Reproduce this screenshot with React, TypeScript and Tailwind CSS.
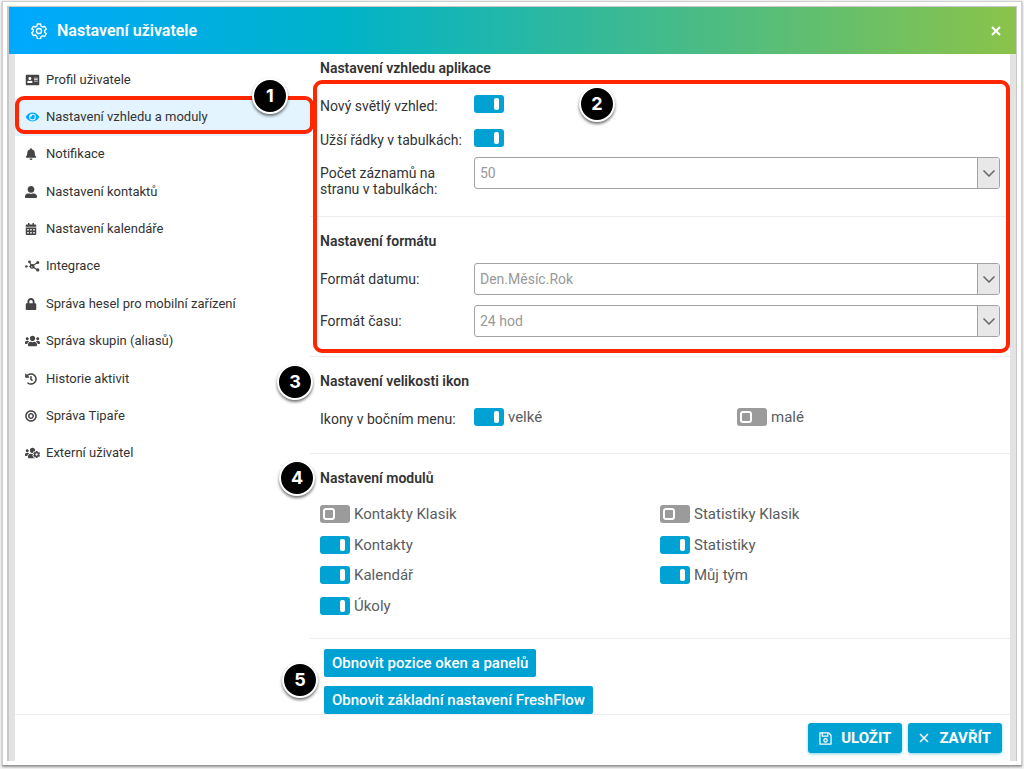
import React, { useState } from 'react'
import type { ReactNode } from 'react'
import {
  FaAddressCard,
  FaBell,
  FaBullseye,
  FaCalendarAlt,
  FaEye,
  FaHistory,
  FaLock,
  FaUserAlt,
  FaUsers,
  FaUsersCog,
} from 'react-icons/fa'

const NetworkIcon = ({ className }: { className?: string }) => (
  <svg viewBox="0 0 20 16" fill="currentColor" stroke="currentColor" className={className}>
    <path d="M9 8 6 3M9 8l7-4M9 8l7 5" fill="none" strokeWidth="1.4" />
    <circle cx="9.5" cy="8.5" r="2.4" fill="none" strokeWidth="1.8" />
    <circle cx="1.8" cy="8.5" r="1.6" stroke="none" />
    <circle cx="6" cy="2.4" r="1.9" stroke="none" />
    <circle cx="17" cy="3.2" r="2" stroke="none" />
    <circle cx="17" cy="13.2" r="2.2" stroke="none" />
    <path d="M3 8.5h4" strokeWidth="1" strokeDasharray="1.4 1" />
  </svg>
)

const GearIcon = () => (
  <svg viewBox="0 0 24 24" fill="none" stroke="currentColor" strokeWidth="2" strokeLinejoin="round" className="size-4">
    <path d="M9.6 1.5h4.8l.7 3.2 2.3 1.3 3.1-1 2.4 4.2-2.4 2.1v2.6l2.4 2.1-2.4 4.2-3.1-1-2.3 1.3-.7 3.2H9.6l-.7-3.2L6.6 18l-3.1 1-2.4-4.2 2.4-2.1v-2.6L1.1 9.2 3.5 5l3.1 1 2.3-1.3z" />
    <circle cx="12" cy="12" r="3.8" />
  </svg>
)

const SaveIcon = () => (
  <svg viewBox="0 0 14 14" fill="none" stroke="currentColor" strokeWidth="1.3" strokeLinejoin="round" className="size-[13px]">
    <path d="M1 1h9.5L13 3.5V13H1z" />
    <path d="M3.5 1v3.5h6V1" />
    <circle cx="7" cy="9" r="1.8" />
  </svg>
)

const CrossIcon = ({ className }: { className: string }) => (
  <svg viewBox="0 0 10 10" fill="none" stroke="currentColor" className={className}>
    <path d="M1 1l8 8M9 1L1 9" />
  </svg>
)

const menu = [
  { label: 'Profil uživatele', Icon: FaAddressCard },
  { label: 'Nastavení vzhledu a moduly', Icon: FaEye },
  { label: 'Notifikace', Icon: FaBell },
  { label: 'Nastavení kontaktů', Icon: FaUserAlt },
  { label: 'Nastavení kalendáře', Icon: FaCalendarAlt },
  { label: 'Integrace', Icon: NetworkIcon },
  { label: 'Správa hesel pro mobilní zařízení', Icon: FaLock },
  { label: 'Správa skupin (aliasů)', Icon: FaUsers },
  { label: 'Historie aktivit', Icon: FaHistory },
  { label: 'Správa Tipaře', Icon: FaBullseye },
  { label: 'Externí uživatel', Icon: FaUsersCog },
]

// icons that need more room than the 12px default
const wide = [FaAddressCard, FaEye, NetworkIcon, FaUsers, FaUsersCog]

const modules = [
  { label: 'Kontakty Klasik', on: false },
  { label: 'Statistiky Klasik', on: false },
  { label: 'Kontakty', on: true },
  { label: 'Statistiky', on: true },
  { label: 'Kalendář', on: true },
  { label: 'Můj tým', on: true },
  { label: 'Úkoly', on: true },
]

function Step({ n, className }: { n: number; className: string }) {
  return (
    <span
      className={`absolute z-10 flex size-9 items-center justify-center rounded-full border-2 border-white bg-black font-['Inter'] text-lg font-bold text-white shadow-[0_2px_3px_rgba(0,0,0,0.55)] ${className}`}
    >
      {n}
    </span>
  )
}

function Toggle({ id, on }: { id: string; on: boolean }) {
  return (
    <input
      id={id}
      type="checkbox"
      defaultChecked={on}
      className="flex h-[18px] w-[30px] shrink-0 appearance-none items-center rounded-[3px] bg-[#9b9b9b] px-[3px] before:size-3 before:rounded-[3px] before:border-2 before:border-white before:content-[''] checked:bg-[#00a1d3] checked:px-[5px] checked:before:ml-auto checked:before:w-[5px] checked:before:rounded-[2px] checked:before:bg-white"
    />
  )
}

function LabeledToggle({ id, label, on }: { id: string; label: string; on: boolean }) {
  return (
    <div className="flex items-center gap-1">
      <Toggle id={id} on={on} />
      <label htmlFor={id} className="text-[15px] leading-5 text-[#5a5d60]">
        {label}
      </label>
    </div>
  )
}

function SelectBox({ id, options }: { id: string; options: string[] }) {
  return (
    <div className="relative flex h-8 min-w-0 flex-1 overflow-hidden rounded-[3px] border border-[#a3a3a3] bg-white">
      <select id={id} className="w-full appearance-none bg-transparent px-[5px] text-sm text-[#999] outline-none">
        {options.map((o) => (
          <option key={o}>{o}</option>
        ))}
      </select>
      <span className="pointer-events-none flex w-[22px] shrink-0 items-center justify-center border-l border-[#a3a3a3] bg-[#e8e8e8] text-[#666]">
        <svg viewBox="0 0 12 7" fill="none" stroke="currentColor" strokeWidth="1.5" className="h-[7px] w-3">
          <path d="M.5.5 6 6 11.5.5" />
        </svg>
      </span>
    </div>
  )
}

function Heading({ children }: { children: ReactNode }) {
  return <h2 className="text-sm leading-5 font-semibold text-[#333]">{children}</h2>
}

function Field({ id, label, children }: { id: string; label: string; children: ReactNode }) {
  return (
    <div className="flex items-start">
      <label htmlFor={id} className="w-[154px] shrink-0 pt-2 pr-1 text-sm leading-4 text-[#333]">
        {label}
      </label>
      {children}
    </div>
  )
}

export default function App() {
  const [active, setActive] = useState(1)

  return (
    <div className="flex min-h-screen bg-[#f4f4f4] px-[2px] pt-px pb-[3px] font-['Roboto',sans-serif]">
      <div className="flex flex-1 border border-[#d0d0d0] border-b-[#999] bg-white px-1 pt-1 pb-1 shadow-[0_1px_2px_rgba(0,0,0,0.4)]">
        <div className="flex flex-1 flex-col border border-b-0 border-l-2 border-[#c8c8c8]">
          <header className="flex h-[47px] items-center bg-[linear-gradient(90deg,#00a9ff,#00b3c8_33%,#8bc34a)] pr-[15px] pl-[22px] text-white">
            <GearIcon />
            <h1 className="ml-[10px] flex-1 text-base font-semibold">Nastavení uživatele</h1>
            <button type="button" aria-label="Zavřít okno">
              <CrossIcon className="size-[10px] stroke-2" />
            </button>
          </header>

          <div className="flex flex-1 flex-col border-x-[6px] border-[#e3e3e3]">
            <div className="flex flex-1">
              <nav className="w-[295px] shrink-0 pt-[7px]">
                <ul className="grid h-[411px] auto-rows-fr">
                  {menu.map(({ label, Icon }, i) => (
                    <li key={label} className="relative flex">
                      <button
                        type="button"
                        onClick={() => setActive(i)}
                        className={`flex w-full items-center pl-[10px] text-left text-[#333] ${i === active ? 'bg-[#e3f4fe]' : ''}`}
                      >
                        <span className={`flex w-[21px] ${i === active ? 'text-[#00aaff]' : 'text-[#444]'}`}>
                          <Icon className={wide.includes(Icon) ? 'h-3 w-[15px]' : 'size-3'} />
                        </span>
                        <span className="text-[13px] leading-5">{label}</span>
                      </button>
                      {i === 1 && (
                        <>
                          <span className="pointer-events-none absolute top-[-2px] right-[-4px] bottom-[2px] left-0 rounded-[9px] border-4 border-[#ff2600]" />
                          <Step n={1} className="-top-5 right-[22px]" />
                        </>
                      )}
                    </li>
                  ))}
                </ul>
              </nav>

              <main className="min-w-0 flex-1">
                <div className="relative">
                  <section className="border-b border-[#ececec] px-[10px] pt-1 pb-[19px]">
                    <Heading>Nastavení vzhledu aplikace</Heading>
                    <div className="mt-[9px] flex h-[34px] items-center">
                      <label htmlFor="light" className="w-[154px] pt-1 text-sm leading-4 text-[#333]">
                        Nový světlý vzhled:
                      </label>
                      <Toggle id="light" on />
                    </div>
                    <div className="mb-[2px] flex h-[34px] items-center">
                      <label htmlFor="rows" className="w-[154px] pt-1 text-sm leading-4 text-[#333]">
                        Užší řádky v tabulkách:
                      </label>
                      <Toggle id="rows" on />
                    </div>
                    <Field id="count" label="Počet záznamů na stranu v tabulkách:">
                      <SelectBox id="count" options={['50', '100', '200']} />
                    </Field>
                  </section>

                  <section className="border-b border-[#ececec] px-[10px] pt-[14px] pb-[19px]">
                    <Heading>Nastavení formátu</Heading>
                    <div className="mt-3 flex flex-col gap-[10px]">
                      <Field id="date" label="Formát datumu:">
                        <SelectBox id="date" options={['Den.Měsíc.Rok', 'Rok-Měsíc-Den']} />
                      </Field>
                      <Field id="time" label="Formát času:">
                        <SelectBox id="time" options={['24 hod', '12 hod']} />
                      </Field>
                    </div>
                  </section>
                  <span className="pointer-events-none absolute top-[26px] right-0 bottom-1 left-[3px] rounded-[9px] border-4 border-[#ff2600]" />
                  <Step n={2} className="top-8 left-[269px]" />
                </div>

                <section className="relative border-b border-[#ececec] px-[10px] pt-[14px] pb-[19px]">
                  <Step n={3} className="top-[7px] -left-[33px]" />
                  <Heading>Nastavení velikosti ikon</Heading>
                  <div className="mt-[9px] flex h-[34px] items-center">
                    <span className="w-[154px] shrink-0 pt-1 text-sm leading-4 text-[#333]">Ikony v bočním menu:</span>
                    <div className="grid flex-1 grid-cols-2">
                      <LabeledToggle id="big" label="velké" on />
                      <LabeledToggle id="small" label="malé" on={false} />
                    </div>
                  </div>
                </section>

                <section className="relative border-b border-[#ececec] px-[10px] pt-[14px] pb-[17px]">
                  <Step n={4} className="top-[6px] -left-[31px]" />
                  <Heading>Nastavení modulů</Heading>
                  <div className="mt-[11px] grid h-[122px] auto-rows-fr grid-cols-2">
                    {modules.map((m, i) => (
                      <LabeledToggle key={m.label} id={`module-${i}`} label={m.label} on={m.on} />
                    ))}
                  </div>
                </section>

                <section className="relative flex flex-col items-start gap-[9px] pt-[10px] pl-[14px]">
                  <Step n={5} className="top-[23px] -left-[28px]" />
                  <button type="button" className="h-7 rounded-[2px] bg-[#00a1d3] px-2 text-[15px] font-medium text-white">
                    Obnovit pozice oken a panelů
                  </button>
                  <button type="button" className="h-7 rounded-[2px] bg-[#00a1d3] px-2 text-[15px] font-medium text-white">
                    Obnovit základní nastavení FreshFlow
                  </button>
                </section>
              </main>
            </div>

            <footer className="flex h-[47px] items-start justify-end gap-[6px] border-t border-[#ececec] pt-2 pr-2">
              <button
                type="button"
                className="flex h-[30px] items-center gap-[9px] rounded-[3px] bg-[#00a1d3] px-[11px] text-[15px] font-bold text-white shadow-[0_1px_3px_rgba(0,161,211,0.5)]"
              >
                <SaveIcon />
                ULOŽIT
              </button>
              <button
                type="button"
                className="flex h-[30px] items-center gap-[10px] rounded-[3px] bg-[#00a1d3] px-[11px] text-[15px] font-bold text-white shadow-[0_1px_3px_rgba(0,161,211,0.5)]"
              >
                <CrossIcon className="size-[10px] stroke-[1.5]" />
                ZAVŘÍT
              </button>
            </footer>
          </div>
        </div>
      </div>
    </div>
  )
}
